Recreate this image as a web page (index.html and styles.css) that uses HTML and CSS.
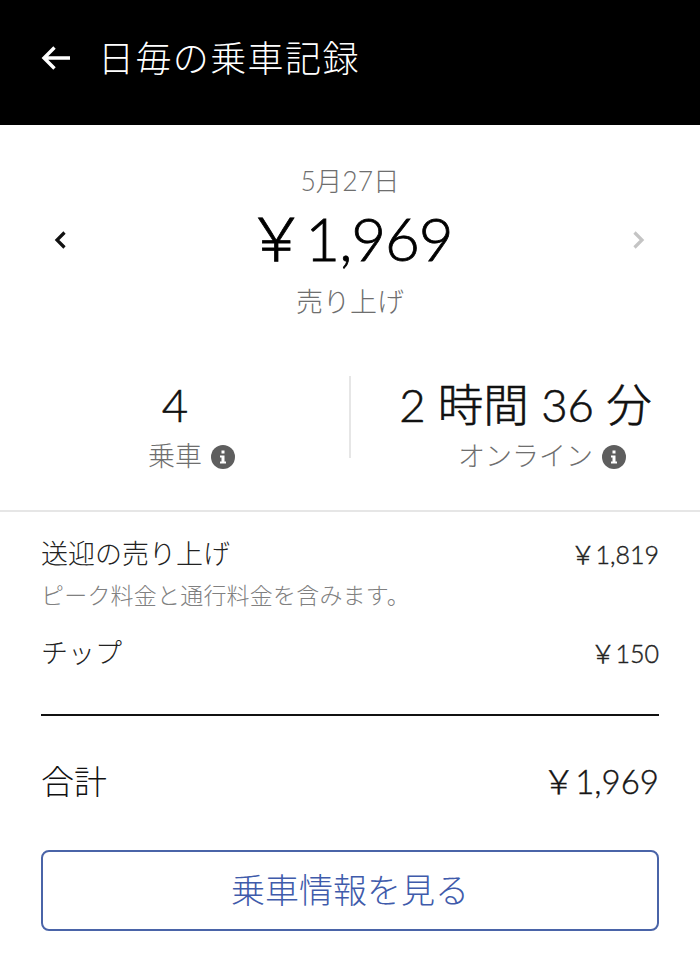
FILE: index.html
```html
<!DOCTYPE html>
<html lang="ja">
<head>
<meta charset="utf-8">
<title>日毎の乗車記録</title>
<link rel="stylesheet" href="styles.css">
</head>
<body>
<header class="topbar">
  <svg class="back" width="30" height="26" viewBox="0 0 30 26"><path d="M29 13H3M13.5 2.500 3 13 13.500 23.500" fill="none" stroke="#fff" stroke-width="3.400"/></svg>
  <h1 class="title">日毎の乗車記録</h1>
</header>
<section class="summary">
  <div class="date">5月27日</div>
  <div class="amount-row">
    <svg class="chev" width="14" height="20" viewBox="0 0 14 20"><path d="M11.500 2.500 4 10l7.500 7.500" fill="none" stroke="#111" stroke-width="3.200"/></svg>
    <div class="amount">&#xFFE5;1,969</div>
    <svg class="chev" width="14" height="20" viewBox="0 0 14 20"><path d="M2.500 2.500 10 10l-7.500 7.500" fill="none" stroke="#c4c4c4" stroke-width="3.200"/></svg>
  </div>
  <div class="caption">売り上げ</div>
</section>
<section class="stats">
  <div class="stat">
    <div class="stat-value">4</div>
    <div class="stat-label"><span>乗車</span><svg class="info" width="24" height="24" viewBox="0 0 24 24"><circle cx="12" cy="12" r="12" fill="#5e5e5e"/><path d="M10.500 5.500h3v3h-3zM9 10.500h4.500v6H15v2H9v-2h1.500v-4H9z" fill="#fff"/></svg></div>
  </div>
  <div class="stat stat-right">
    <div class="stat-value">2 時間 36 分</div>
    <div class="stat-label"><span>オンライン</span><svg class="info" width="24" height="24" viewBox="0 0 24 24"><circle cx="12" cy="12" r="12" fill="#5e5e5e"/><path d="M10.500 5.500h3v3h-3zM9 10.500h4.500v6H15v2H9v-2h1.500v-4H9z" fill="#fff"/></svg></div>
  </div>
</section>
<section class="details">
  <div class="line"><span>送迎の売り上げ</span><span class="num">&#xFFE5;1,819</span></div>
  <div class="note">ピーク料金と通行料金を含みます。</div>
  <div class="line line-tip"><span>チップ</span><span class="num">&#xFFE5;150</span></div>
  <div class="total"><span>合計</span><span class="num">&#xFFE5;1,969</span></div>
  <button class="cta" type="button">乗車情報を見る</button>
</section>
</body>
</html>
```
FILE: styles.css
```css
* { box-sizing: border-box; }
html, body { margin: 0; padding: 0; }
body {
  width: 700px;
  height: 962px;
  overflow: hidden;
  background: #fff;
  color: #111;
  font-family: "Lato", "Noto Sans CJK JP", sans-serif;
}
.topbar {
  height: 125px;
  background: #000;
  color: #fff;
  display: flex;
  align-items: center;
  padding-left: 41px;
  gap: 27px;
  padding-bottom: 10px;
}
.back { display: block; }
.title { margin: 0; font-size: 36px; line-height: 50px; font-weight: 300; letter-spacing: 1.400px; }
.summary { padding-top: 40px; display: flex; flex-direction: column; align-items: center; }
.date { font-size: 26.500px; line-height: 32px; color: #6e6e6e; font-weight: 300; }
.amount-row {
  width: 100%;
  display: flex;
  align-items: center;
  justify-content: space-between;
  padding: 0 54px 0 53px;
  height: 68px;
  margin-top: 9px;
}
.amount { font-size: 60px; line-height: 64px; padding-bottom: 4px; font-weight: 300; -webkit-text-stroke: .8px #000; color: #000; letter-spacing: -1px; }
.caption { font-size: 27px; line-height: 36px; color: #6e6e6e; margin-top: 10px; font-weight: 300; }
.stats {
  display: grid;
  grid-template-columns: 350px 350px;
  margin-top: 56px;
  border-bottom: 2px solid #e6e6e6;
  height: 136px;
}
.stat { display: flex; flex-direction: column; align-items: center; height: 82px; }
.stat-right { border-left: 2px solid #e6e6e6; margin-left: -1px; }
.stat-value { font-size: 45.500px; line-height: 52px; margin-top: 3px; font-weight: 300; -webkit-text-stroke: .6px #111; }
.stat-label { position: relative; font-size: 27px; line-height: 34px; color: #6e6e6e; margin-top: 8px; white-space: nowrap; font-weight: 300; }
.info { position: absolute; left: calc(100% + 9px); top: 6px; display: block; }
.details { padding: 23px 41px 0; }
.line { display: flex; justify-content: space-between; align-items: center; font-size: 27px; line-height: 38px; color: #222; font-weight: 300; }
.num { font-weight: 300; font-size: 25px; -webkit-text-stroke: .4px #222; }
.note { font-size: 23px; line-height: 30px; color: #808080; margin-top: 7px; letter-spacing: .2px; font-weight: 300; }
.line-tip { margin-top: 24px; }
.total {
  display: flex;
  justify-content: space-between;
  align-items: center;
  border-top: 2px solid #111;
  margin-top: 42px;
  padding-top: 43px;
  font-size: 33px;
  line-height: 44px;
  font-weight: 300;
}
.total .num { font-size: 33px; }
.cta {
  display: block;
  width: 100%;
  height: 81px;
  margin-top: 47px;
  padding-bottom: 6px;
  background: #fff;
  border: 2px solid #4a64a8;
  border-radius: 8px;
  color: #3f5bab;
  font-family: inherit;
  font-size: 34px;
  font-weight: 300;
}
```
